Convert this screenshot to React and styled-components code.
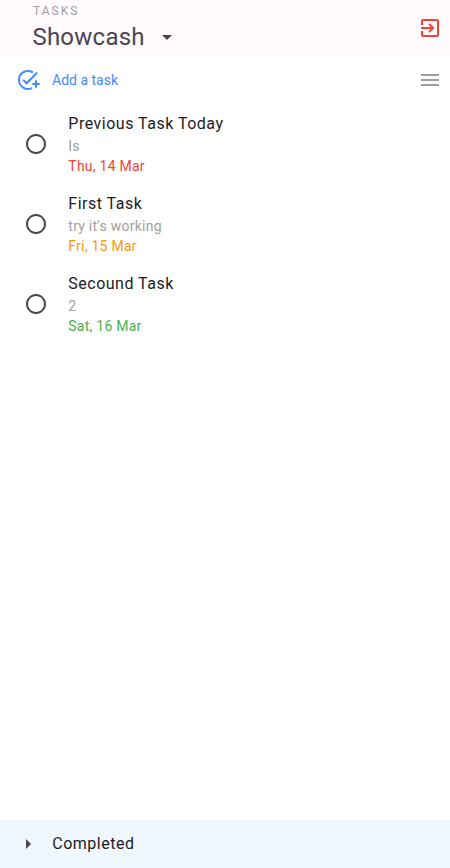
import React from "react";
import styled, { createGlobalStyle } from "styled-components";

const Global = createGlobalStyle`
  * { box-sizing: border-box; }
  body { margin: 0; background: #fff; font-family: Roboto, sans-serif; }
  p, ul { margin: 0; padding: 0; }
`;
const Page = styled.div`
  display: flex;
  flex-direction: column;
  width: 100%;
  height: 100vh;
`;
const Header = styled.header`
  display: flex;
  justify-content: space-between;
  height: 56px;
  padding: 0 8px 0 32.4px;
  background: #fffbff;
`;
const Heading = styled.div`
  display: flex;
  flex-direction: column;
`;
const Overline = styled.p`
  height: 21px;
  padding-left: 0.6px;
  font-size: 12px;
  line-height: 22px;
  letter-spacing: 2px;
  color: #9e9e9e;
`;
const ListPicker = styled.button`
  display: flex;
  align-items: center;
  gap: 10px;
  padding: 0;
  border: 0;
  background: none;
  font: 400 24px/32px Roboto, sans-serif;
  letter-spacing: 0.25px;
  color: #49454f;
`;
const IconButton = styled.button`
  display: flex;
  align-self: center;
  padding: 0;
  border: 0;
  background: none;
  color: ${(p) => p.$color};
`;
const Glyph = styled.svg`
  display: block;
  width: 24px;
  height: 24px;
  fill: ${(p) => p.$color || "currentColor"};
`;
const Toolbar = styled.div`
  display: flex;
  justify-content: space-between;
  height: 48px;
  padding: 0 8px 0 16px;
`;
const AddButton = styled.button`
  display: flex;
  align-items: center;
  gap: 12px;
  padding: 0;
  border: 0;
  background: none;
  font: 400 14px/20px Roboto, sans-serif;
  color: #448aff;
`;
const TaskList = styled.ul`
  flex: 1;
  list-style: none;
`;
const Task = styled.li`
  display: flex;
  align-items: center;
  gap: 20.3px;
  height: 80px;
  padding-left: 24px;
`;
const Title = styled.p`
  font-size: 16px;
  line-height: 24px;
  letter-spacing: 0.5px;
  color: #1c1b1f;
`;
const Detail = styled.p`
  font-size: 14px;
  line-height: 20px;
  letter-spacing: 0.25px;
  color: ${(p) => p.$color || "#9e9e9e"};
`;
const Footer = styled.footer`
  display: flex;
  align-items: center;
  gap: 12.3px;
  height: 48px;
  padding-left: 16px;
  background: #f0f8ff;
  font-size: 16px;
  line-height: 24px;
  letter-spacing: 0.5px;
  color: #1c1b1f;
`;

const paths = {
  down: "M7 10l5 5 5-5z",
  right: "M10 17l5-5-5-5v10z",
  exit: "M10.79 16.29c.39.39 1.02.39 1.41 0l3.59-3.59c.39-.39.39-1.02 0-1.41L12.2 7.7a.996.996 0 1 0-1.41 1.41L12.67 11H3v2h9.67l-1.88 1.88c-.39.39-.38 1.03 0 1.41zM19 3H5a2 2 0 0 0-2 2v4h2V5h14v14H5v-4H3v4c0 1.1.9 2 2 2h14c1.1 0 2-.9 2-2V5c0-1.1-.9-2-2-2z",
  menu: "M3 18h18v-2H3zm0-5h18v-2H3zm0-7v2h18V6z",
  circle: "M12 2C6.48 2 2 6.48 2 12s4.48 10 10 10 10-4.48 10-10S17.52 2 12 2zm0 18c-4.42 0-8-3.58-8-8s3.58-8 8-8 8 3.58 8 8-3.58 8-8 8z",
};
const Icon = ({ name, color }) => (
  <Glyph viewBox="0 0 24 24" $color={color} aria-hidden="true">
    <path d={paths[name]} />
  </Glyph>
);
const AddTaskIcon = () => (
  <Glyph viewBox="0 0 24 24" aria-hidden="true">
    <g fill="none" stroke="currentColor" strokeWidth="2" strokeLinecap="round" strokeLinejoin="round">
      <path d="M16.1 4A9 9 0 1 0 15.4 20.33" />
      <path d="M7.76 12.35l2.83 2.83 10-10" />
      <path d="M20 13v6M17 16h6" />
    </g>
  </Glyph>
);

const tasks = [
  { title: "Previous Task Today", note: "Is", date: "Thu, 14 Mar", color: "#f44336" },
  { title: "First Task", note: "try it's working", date: "Fri, 15 Mar", color: "#ff9800" },
  { title: "Secound Task", note: "2", date: "Sat, 16 Mar", color: "#4caf50" },
];

export default function App() {
  return (
    <Page>
      <Global />
      <Header>
        <Heading>
          <Overline>TASKS</Overline>
          <ListPicker>Showcash<Icon name="down" /></ListPicker>
        </Heading>
        <IconButton $color="#f44336" aria-label="Sign out"><Icon name="exit" /></IconButton>
      </Header>
      <Toolbar>
        <AddButton><AddTaskIcon />Add a task</AddButton>
        <IconButton $color="#9e9e9e" aria-label="Sort"><Icon name="menu" /></IconButton>
      </Toolbar>
      <TaskList>
        {tasks.map((t) => (
          <Task key={t.title}>
            <IconButton $color="#49454f" aria-label={`Complete ${t.title}`}><Icon name="circle" /></IconButton>
            <div>
              <Title>{t.title}</Title>
              <Detail>{t.note}</Detail>
              <Detail $color={t.color}>{t.date}</Detail>
            </div>
          </Task>
        ))}
      </TaskList>
      <Footer><Icon name="right" color="#49454f" />Completed</Footer>
    </Page>
  );
}
